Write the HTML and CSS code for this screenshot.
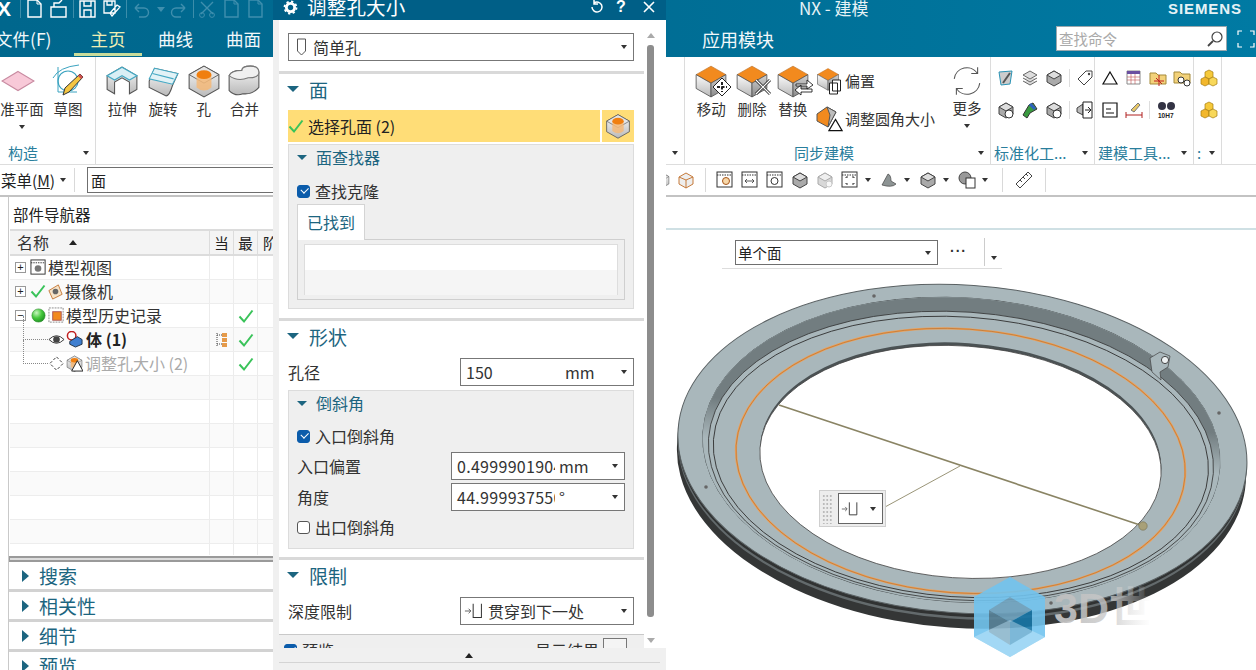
FILE: index.html
```html
<!DOCTYPE html>
<html lang="zh">
<head>
<meta charset="utf-8">
<title>NX - 建模</title>
<link rel="stylesheet" href="styles.css">
</head>
<body>
<svg class="defs" width="0" height="0" aria-hidden="true">
  <defs>
    <linearGradient id="gl" x1="0" y1="0" x2="0" y2="1"><stop offset="0" stop-color="#fafafa"/><stop offset="1" stop-color="#b9b9b9"/></linearGradient>
    <linearGradient id="gr" x1="0" y1="0" x2="0" y2="1"><stop offset="0" stop-color="#d2d2d2"/><stop offset="1" stop-color="#8a8a8a"/></linearGradient>
    <linearGradient id="fade" x1="0" y1="0" x2="1" y2="0"><stop offset="0" stop-color="#bdbdbd"/><stop offset=".6" stop-color="#c9c9c9" stop-opacity=".75"/><stop offset="1" stop-color="#ddd" stop-opacity="0"/></linearGradient>
    <linearGradient id="groove" gradientUnits="userSpaceOnUse" x1="0" y1="415" x2="0" y2="456"><stop offset="0" stop-color="#727d80"/><stop offset="1" stop-color="#727d80" stop-opacity="0"/></linearGradient>
    <radialGradient id="ballg" cx=".35" cy=".3" r=".8"><stop offset="0" stop-color="#c8f5c0"/><stop offset=".5" stop-color="#45c83c"/><stop offset="1" stop-color="#1b8a20"/></radialGradient>
    <symbol id="block" viewBox="0 0 32 32"><path d="M16 2 30 10 16 18 2 10Z" fill="#f28a1e" stroke="#b96a1c" stroke-width=".6"/><path d="M2 10 16 18V31L2 23Z" fill="url(#gl)" stroke="#555" stroke-width=".8"/><path d="M30 10 16 18V31L30 23Z" fill="url(#gr)" stroke="#555" stroke-width=".8"/></symbol>
    <symbol id="hole" viewBox="0 0 32 32"><path d="M16 2 30 10V23L16 31 2 23V10Z" fill="url(#gl)" stroke="#555" stroke-width="1"/><path d="M16 2 30 10 16 18 2 10Z" fill="#e4e4e4" stroke="#555" stroke-width=".8"/><path d="M9 10V22Q16 28 23 22V10Z" fill="#f4b878" opacity=".85"/><ellipse cx="16" cy="10" rx="7" ry="4.2" fill="#f07f10"/></symbol>
    <symbol id="extrude" viewBox="0 0 32 32"><path d="M2 11 16 3 30 11V24L23 28V17L16 13 9 17V28L2 24Z" fill="url(#gl)" stroke="#555"/><path d="M2 11 16 3 30 11 23 15 16 11 9 15Z" fill="#d9eff5" stroke="#45a9c4" stroke-width="1.2"/></symbol>
    <symbol id="revolve" viewBox="0 0 32 32"><path d="M3 16 8 4 30 9 25 20Q22 30 19 30L3 22Z" fill="url(#gl)" stroke="#555"/><path d="M8 4 30 9 25 19 3 14Z" fill="#e2f2f6" stroke="#45a9c4"/><path d="M6 9 26 14" stroke="#45a9c4"/></symbol>
    <symbol id="unite" viewBox="0 0 32 32"><path d="M2 11V25Q8 31 15 28 24 29 30 22V8Q30 2 22 2 14 2 14 6 4 6 2 11Z" fill="url(#gl)" stroke="#555"/><path d="M2 11Q4 6 14 6 14 2 22 2 30 2 30 8 30 13 20 13 10 17 2 11Z" fill="#f0f0f0" stroke="#777"/></symbol>
    <symbol id="plane" viewBox="0 0 32 20"><path d="M16 1 31 10 16 19 1 10Z" fill="#f8c9d8" stroke="#c88aa0"/></symbol>
    <symbol id="sketch" viewBox="0 0 34 34"><path d="M2 14Q8 3 28 1" fill="none" stroke="#3ba3c0"/><path d="M7 3V28H26" fill="none" stroke="#3ba3c0"/><circle cx="17" cy="17" r="10" fill="none" stroke="#3ba3c0" stroke-width="1.2"/><path d="M12 31 14 24 29 10 32 13 18 28Z" fill="#f4c542" stroke="#333" stroke-width="1"/><path d="M27 12 30 15 32 13 29 10Z" fill="#d05050"/></symbol>
    <symbol id="doc" viewBox="0 0 20 20"><path d="M3 1H12L16 5V18H3Z" fill="none" stroke="currentColor" stroke-width="1.4"/><path d="M12 1V5H16" fill="none" stroke="currentColor"/></symbol>
    <symbol id="tick" viewBox="0 0 16 16"><path d="M1.5 8.5 6 13.5 14.5 2.5" fill="none" stroke="#3ac35a" stroke-width="2"/></symbol>
    <symbol id="winbox" viewBox="0 0 18 18"><rect x="1" y="1" width="15" height="15" fill="#fff" stroke="#333"/><path d="M1 4H16" stroke="#333" stroke-dasharray="1.5 1"/></symbol>
    <symbol id="gray" viewBox="0 0 18 18"><path d="M9 2 16 6V13L9 17 2 13V6Z" fill="#aaa" stroke="#444"/><path d="M9 2 16 6 9 10 2 6Z" fill="#ddd" stroke="#444"/></symbol>
    <symbol id="gold" viewBox="0 0 18 18"><path d="M9 1 13 3V8L9 10 5 8V3Z" fill="#f6c93a" stroke="#a57b10" stroke-width=".7"/><path d="M5 8 9 10V15L5 17 1 15V10Z" fill="#f2b72c" stroke="#a57b10" stroke-width=".7"/><path d="M13 8 17 10V15L13 17 9 15V10Z" fill="#f8d85a" stroke="#a57b10" stroke-width=".7"/></symbol>
    <symbol id="depth" viewBox="0 0 24 18"><path d="M1 9H7M5 6.5 7.5 9 5 11.5" fill="none" stroke="#444" stroke-width=".9"/><path d="M10 1V16H19V1" fill="none" stroke="#333" stroke-width="1.1"/></symbol>
  </defs>
</svg>

<div class="app">
  <header class="header">
    <div class="titlebar">
      <div class="quick">
        <span class="nx">X</span><i class="qsep"></i>
        <svg class="qi"><use href="#doc"/></svg>
        <svg class="qi"><path d="M2 8H17V18H2ZM5 8V4H10L13 1" fill="none" stroke="currentColor" stroke-width="1.4"/></svg>
        <i class="qsep"></i>
        <svg class="qi"><path d="M2 2H17V18H2ZM6 2V7H13V2M6 18V11H13V18" fill="none" stroke="currentColor" stroke-width="1.4"/></svg>
        <svg class="qi"><path d="M2 2H13V14H2ZM5 2V6H10V2M10 17 18 8 15 6 8 14Z" fill="none" stroke="currentColor" stroke-width="1.3"/></svg>
        <i class="qsep"></i>
        <svg class="qi dim"><path d="M4 9H13A4 4 0 0 1 13 18H8M4 9 8 5M4 9 8 13" fill="none" stroke="currentColor" stroke-width="1.4"/></svg>
        <svg class="qi dim small"><path d="M4 8H12L8 13Z" fill="currentColor"/></svg>
        <svg class="qi dim"><path d="M16 9H7A4 4 0 0 0 7 18H12M16 9 12 5M16 9 12 13" fill="none" stroke="currentColor" stroke-width="1.4"/></svg>
        <i class="qsep"></i>
        <svg class="qi dim"><path d="M3 3 15 15M15 3 3 15" fill="none" stroke="currentColor" stroke-width="1.4"/><circle cx="4" cy="16" r="2.4" fill="none" stroke="currentColor"/><circle cx="14" cy="16" r="2.4" fill="none" stroke="currentColor"/></svg>
        <svg class="qi dim"><use href="#doc"/></svg>
        <svg class="qi dim"><use href="#doc"/></svg>
      </div>
      <div class="apptitle">NX - 建模</div>
      <div class="siemens">SIEMENS</div>
    </div>
    <div class="tabbar">
      <span class="tab file">文件(F)</span>
      <span class="tab active">主页</span>
      <span class="tab">曲线</span>
      <span class="tab">曲面</span>
      <span class="tab modules">应用模块</span>
      <div class="search">
        <span class="search-text">查找命令</span>
        <svg class="search-icon" viewBox="0 0 18 18"><circle cx="11" cy="7" r="5" fill="none" stroke="#444" stroke-width="1.2"/><path d="M7 11 2 16" stroke="#444" stroke-width="1.8"/></svg>
      </div>
      <svg class="fullscreen" viewBox="0 0 18 18"><path d="M1 5V1H5M13 1H17V5M17 13V17H13M5 17H1V13" fill="none" stroke="#fff" stroke-width="1.2"/></svg>
    </div>
  </header>

  <section class="ribbon">
    <div class="group g-construct">
      <div class="gbody">
        <div class="rbtn r-plane"><svg class="ri plane-i"><use href="#plane"/></svg><span>准平面</span><b class="caret"></b></div>
        <div class="rbtn r-sketch"><svg class="ri"><use href="#sketch"/></svg><span>草图</span></div>
      </div>
      <div class="glabel"><span>构造</span><b class="caret"></b></div>
    </div>
    <div class="group g-features">
      <div class="gbody tight">
        <div class="rbtn"><svg class="ri"><use href="#extrude"/></svg><span>拉伸</span></div>
        <div class="rbtn"><svg class="ri"><use href="#revolve"/></svg><span>旋转</span></div>
        <div class="rbtn"><svg class="ri"><use href="#hole"/></svg><span>孔</span></div>
        <div class="rbtn"><svg class="ri"><use href="#unite"/></svg><span>合并</span></div>
      </div>
    </div>
    <div class="group g-hidden">
      <div class="gbody"></div>
      <div class="glabel end"><b class="caret"></b></div>
    </div>
    <div class="group g-sync">
      <div class="gbody tight">
        <div class="rbtn"><span class="ri-wrap"><svg class="ri"><use href="#block"/></svg><svg class="ri-over" viewBox="0 0 20 20"><path d="M10 1 19 10 10 19 1 10Z" fill="#fff" stroke="#222"/><path d="M10 5V15M5 10H15" stroke="#222" stroke-width="2" stroke-dasharray="3 1.5"/></svg></span><span>移动</span></div>
        <div class="rbtn"><span class="ri-wrap"><svg class="ri"><use href="#block"/></svg><svg class="ri-over" viewBox="0 0 20 20"><path d="M3 3 17 17M17 3 3 17" stroke="#333" stroke-width="3"/><path d="M3 3 17 17M17 3 3 17" stroke="#fff" stroke-width="1.2"/></svg></span><span>删除</span></div>
        <div class="rbtn"><span class="ri-wrap"><svg class="ri"><use href="#block"/></svg><svg class="ri-over" viewBox="0 0 20 20"><path d="M2 7H13V3L19 8 13 12V9H2ZM18 12H7V8L1 13 7 18V15H18Z" fill="#fff" stroke="#222" stroke-width=".9"/></svg></span><span>替换</span></div>
        <div class="rstack">
          <div class="rrow"><span class="ri-wrap small"><svg class="ri"><use href="#block"/></svg><svg class="ri-over sm" viewBox="0 0 14 16"><path d="M4 1H12V12H4ZM1 4H9V15H1Z" fill="#fff" stroke="#222"/></svg></span><span>偏置</span></div>
          <div class="rrow"><span class="ri-wrap small"><svg class="ri" viewBox="0 0 24 24"><path d="M1 9 11 2 20 7 12 22 1 16Z" fill="#f28a1e" stroke="#555"/><path d="M11 2 20 7 12 22 14 10Z" fill="#bdbdbd" stroke="#555"/></svg><svg class="ri-over sm" viewBox="0 0 16 16"><path d="M8 2 15 14H1Z" fill="#fff" stroke="#111" stroke-width="1.2"/></svg></span><span>调整圆角大小</span></div>
        </div>
        <div class="rbtn more"><svg class="ri" viewBox="0 0 32 32"><path d="M4 14A12 12 0 0 1 26 9M26 3V9H20M28 18A12 12 0 0 1 6 23M6 29V23H12" fill="none" stroke="#555" stroke-width="1"/></svg><span>更多</span><b class="caret"></b></div>
      </div>
      <div class="glabel"><span class="center">同步建模</span><b class="caret"></b></div>
    </div>
    <div class="group g-std">
      <div class="gbody mini">
        <div class="mrow">
          <svg class="mi" viewBox="0 0 18 18"><path d="M2 3 15 2 13 15 4 16Z" fill="#ccc" stroke="#2a93b5"/><path d="M6 14 13 4" stroke="#555" stroke-width="2"/></svg>
          <svg class="mi" viewBox="0 0 18 18"><path d="M9 2 16 6 9 10 2 6ZM2 9 9 13 16 9M2 12 9 16 16 12" fill="#ddd" stroke="#666"/></svg>
          <svg class="mi" viewBox="0 0 18 18"><use href="#gray"/></svg>
          <i class="msep"></i>
          <svg class="mi" viewBox="0 0 18 18"><path d="M2 10 10 2H16V8L8 16Z" fill="#fff" stroke="#444"/><circle cx="13" cy="5" r="1.2" fill="#444"/></svg>
        </div>
        <div class="mrow">
          <svg class="mi" viewBox="0 0 18 18"><use href="#gray"/><circle cx="12" cy="13" r="4" fill="#fff" stroke="#333"/></svg>
          <svg class="mi" viewBox="0 0 18 18"><path d="M2 14 8 4 12 2 16 8 9 12 6 17Z" fill="#3a9a40" stroke="#333"/><path d="M9 3 14 8" stroke="#2c5fbe" stroke-width="3"/></svg>
          <svg class="mi" viewBox="0 0 18 18"><use href="#gray"/><circle cx="12" cy="13" r="4" fill="#fff" stroke="#333"/></svg>
          <i class="msep"></i>
          <svg class="mi" viewBox="0 0 18 18"><path d="M1 7 7 3V14L1 11Z" fill="#bbb" stroke="#444"/><path d="M7 1H16V17H7Z" fill="#fff" stroke="#222"/><path d="M9 9H14M12 6 15 9 12 12" fill="none" stroke="#222"/></svg>
        </div>
      </div>
      <div class="glabel"><span>标准化工...</span><b class="caret"></b></div>
    </div>
    <div class="group g-tools">
      <div class="gbody mini">
        <div class="mrow">
          <svg class="mi" viewBox="0 0 18 18"><path d="M9 3 16 15H2Z" fill="#fff" stroke="#111" stroke-width="1.2"/></svg>
          <svg class="mi" viewBox="0 0 18 18"><path d="M2 2H15V15H2Z" fill="#fff" stroke="#8a8a8a"/><path d="M2 2H15V5H2Z" fill="#6a4fa0"/><path d="M2 8H15M2 11H15M6 5V15M10 5V15" stroke="#c05050" stroke-width=".6"/></svg>
          <svg class="mi" viewBox="0 0 18 18"><path d="M1 4H7L9 6H17V15H1Z" fill="#f3d27a" stroke="#a58a3a"/><path d="M5 12H15M10 6V17M7 9 13 15" stroke="#c02020"/></svg>
          <svg class="mi" viewBox="0 0 18 18"><path d="M1 3H7L9 5H17V14H1Z" fill="#f3d27a" stroke="#a58a3a"/><circle cx="8" cy="11" r="3" fill="#fff" stroke="#333"/><circle cx="14" cy="14" r="3" fill="#fff" stroke="#333"/></svg>
        </div>
        <div class="mrow">
          <svg class="mi" viewBox="0 0 18 18"><path d="M2 2H16V16H2Z" fill="#fff" stroke="#111" stroke-width="1.2"/><path d="M5 8H10M5 12H13" stroke="#111"/></svg>
          <svg class="mi" viewBox="0 0 18 18"><path d="M1 14H17M1 11V17M17 11V17" stroke="#b02020"/><path d="M6 9 13 2 15 4 9 11Z" fill="#e8c868" stroke="#777"/></svg>
          <i class="msep"></i>
          <svg class="mi wide" viewBox="0 0 22 18"><circle cx="6" cy="5" r="4" fill="#334"/><circle cx="15" cy="5" r="4" fill="#334"/><text class="tol" x="2" y="17">10H7</text></svg>
        </div>
      </div>
      <div class="glabel"><span>建模工具...</span><b class="caret"></b></div>
    </div>
    <div class="group g-gold">
      <div class="gbody mini">
        <div class="mrow"><svg class="mi"><use href="#gold"/></svg></div>
        <div class="mrow"><svg class="mi"><use href="#gold"/></svg></div>
      </div>
      <div class="glabel"><span>:</span><b class="caret"></b></div>
    </div>
  </section>

  <section class="toolbar">
    <span class="menu-btn">菜单(<u>M</u>)</span><b class="caret dark"></b>
    <i class="tsep first"></i>
    <div class="filter"><span>面</span><b class="caret dark"></b></div>
    <div class="tright">
      <svg class="ti" viewBox="0 0 18 18"><use href="#hole"/></svg>
      <svg class="ti" viewBox="0 0 18 18"><path d="M9 2 16 6V13L9 17 2 13V6Z" fill="#eee" stroke="#c67a3a"/><path d="M9 9V17M2 6 9 9 16 6" stroke="#c67a3a" fill="none"/></svg>
      <i class="tsep"></i>
      <svg class="ti" viewBox="0 0 18 18"><use href="#winbox"/><circle cx="10" cy="10" r="3.5" fill="#f7d7a8" stroke="#a5551a"/></svg>
      <svg class="ti" viewBox="0 0 18 18"><use href="#winbox"/><path d="M4 10H13M4 10 6 8M4 10 6 12M13 10 11 8M13 10 11 12" fill="none" stroke="#333" stroke-width=".8"/></svg>
      <svg class="ti" viewBox="0 0 18 18"><use href="#winbox"/><circle cx="8.5" cy="10" r="3.5" fill="none" stroke="#333"/></svg>
      <svg class="ti" viewBox="0 0 18 18"><use href="#gray"/></svg>
      <svg class="ti pale" viewBox="0 0 18 18"><use href="#gray"/><circle cx="13" cy="13" r="3" fill="#eee" stroke="#888"/></svg>
      <svg class="ti" viewBox="0 0 18 18"><use href="#winbox"/><path d="M5 7V6H7M11 6H13V7M13 12V13H11M7 13H5V12" fill="none" stroke="#333"/></svg><b class="caret dark"></b>
      <svg class="ti" viewBox="0 0 18 18"><path d="M2 14 8 3Q11 4 11 10L16 13Q12 17 2 14Z" fill="#8d9494" stroke="#444" stroke-width=".7"/></svg><b class="caret dark"></b>
      <svg class="ti" viewBox="0 0 18 18"><use href="#gray"/></svg><b class="caret dark"></b>
      <svg class="ti" viewBox="0 0 18 18"><circle cx="7" cy="7" r="6" fill="#999" stroke="#444"/><rect x="8" y="7" width="9" height="10" fill="#fff" stroke="#333"/></svg><b class="caret dark"></b>
      <i class="tsep wide"></i>
      <svg class="ti" viewBox="0 0 18 18"><path d="M1 13 13 1 17 5 5 17Z" fill="#fff" stroke="#444"/><path d="M5 9 7 11M8 6 10 8M11 3 13 5" stroke="#444"/></svg>
      <i class="tsep wide"></i>
    </div>
  </section>

  <main class="workspace">
    <aside class="navigator">
      <div class="nav-title">部件导航器</div>
      <div class="tree">
        <div class="thead">
          <div class="cname">名称<b class="sort"></b></div><div class="ccol">当</div><div class="ccol">最</div><div class="ccol">阶</div>
        </div>
        <div class="trow">
          <div class="cname"><b class="expander">+</b><svg class="ni" viewBox="0 0 18 18"><use href="#winbox"/><circle cx="8.5" cy="10" r="3.5" fill="#777"/></svg><span>模型视图</span></div><div class="ccol"></div><div class="ccol"></div><div class="ccol"></div>
        </div>
        <div class="trow alt">
          <div class="cname"><b class="expander">+</b><svg class="ni tk"><use href="#tick"/></svg><svg class="ni" viewBox="0 0 18 18"><path d="M2 8 12 2 16 12 6 17Z" fill="#f6e3c8" stroke="#c67a3a"/><circle cx="9" cy="9" r="3" fill="#666"/></svg><span>摄像机</span></div><div class="ccol"></div><div class="ccol"></div><div class="ccol"></div>
        </div>
        <div class="trow">
          <div class="cname"><b class="expander">−</b><svg class="ni" viewBox="0 0 18 18"><circle cx="9" cy="9" r="7" fill="url(#ballg)" stroke="#2a8a2a" stroke-width=".6"/></svg><svg class="ni" viewBox="0 0 18 18"><rect x="1" y="1" width="15" height="15" fill="#fff" stroke="#888" stroke-dasharray="2 1"/><rect x="5" y="5" width="9" height="9" fill="#f28a1e" stroke="#a55"/></svg><span>模型历史记录</span></div><div class="ccol"></div><div class="ccol"><svg class="ct"><use href="#tick"/></svg></div><div class="ccol"></div>
        </div>
        <div class="trow alt">
          <div class="cname sub"><i class="dots"></i><svg class="ni" viewBox="0 0 18 18"><path d="M1 9Q9 1 17 9 9 17 1 9Z" fill="#fff" stroke="#333"/><circle cx="9" cy="9" r="3.5" fill="#444"/></svg><svg class="ni" viewBox="0 0 18 18"><circle cx="6" cy="5" r="4.5" fill="#fff" stroke="#c02020" stroke-width="1.6"/><path d="M4 11 12 6 17 9V14L10 17 4 14Z" fill="#3f7fd0" stroke="#234"/></svg><strong>体 (1)</strong></div><div class="ccol"><svg class="ct" viewBox="0 0 16 16"><path d="M3 1V15M3 3H8M3 12H8" stroke="#444" stroke-dasharray="1 1"/><rect x="8" y="1" width="5" height="4" fill="#e59a4a"/><rect x="8" y="6" width="5" height="4" fill="#e59a4a"/><rect x="8" y="11" width="5" height="4" fill="#e59a4a"/></svg></div><div class="ccol"><svg class="ct"><use href="#tick"/></svg></div><div class="ccol"></div>
        </div>
        <div class="trow">
          <div class="cname sub last"><i class="dots"></i><svg class="ni" viewBox="0 0 18 18"><path d="M9 2 16 9 9 16 2 9Z" fill="none" stroke="#333" stroke-dasharray="3 2"/></svg><svg class="ni" viewBox="0 0 18 18"><use href="#hole"/><path d="M12 6 18 17H6Z" fill="#fff" stroke="#222"/></svg><span class="muted">调整孔大小 (2)</span></div><div class="ccol"></div><div class="ccol"><svg class="ct"><use href="#tick"/></svg></div><div class="ccol"></div>
        </div>
        <div class="trow alt"><div class="cname"></div><div class="ccol"></div><div class="ccol"></div><div class="ccol"></div></div>
        <div class="trow"><div class="cname"></div><div class="ccol"></div><div class="ccol"></div><div class="ccol"></div></div>
        <div class="trow alt"><div class="cname"></div><div class="ccol"></div><div class="ccol"></div><div class="ccol"></div></div>
        <div class="trow"><div class="cname"></div><div class="ccol"></div><div class="ccol"></div><div class="ccol"></div></div>
        <div class="trow alt"><div class="cname"></div><div class="ccol"></div><div class="ccol"></div><div class="ccol"></div></div>
        <div class="trow"><div class="cname"></div><div class="ccol"></div><div class="ccol"></div><div class="ccol"></div></div>
        <div class="trow alt"><div class="cname"></div><div class="ccol"></div><div class="ccol"></div><div class="ccol"></div></div>
        <div class="trow stub"><div class="cname"></div><div class="ccol"></div><div class="ccol"></div><div class="ccol"></div></div>
        <div class="hscroll"></div>
      </div>
      <div class="acc"><b class="tri-r"></b>搜索</div>
      <div class="acc"><b class="tri-r"></b>相关性</div>
      <div class="acc"><b class="tri-r"></b>细节</div>
      <div class="acc"><b class="tri-r"></b>预览</div>
    </aside>

    <div class="viewport">
      <div class="view-tabs"></div>
      <svg class="scene" viewBox="273 197 983 473">
        <g transform="rotate(4 962 455)">
          <ellipse cx="962" cy="463" rx="285" ry="165" fill="#343636"/>
          <ellipse cx="962" cy="454" rx="285" ry="165" fill="#636a6c"/>
          <ellipse cx="962" cy="451.5" rx="285" ry="165" fill="#303232"/>
          <ellipse cx="962" cy="449" rx="285" ry="164" fill="#a9b7bb" stroke="#5a6163"/>
          <ellipse cx="961" cy="450" rx="259" ry="152" fill="#a9b7bb" stroke="#3c4142" stroke-width=".9"/>
          <ellipse cx="961" cy="450" rx="259" ry="152" fill="#727d80"/>
          <ellipse cx="961" cy="450" rx="259" ry="152" fill="#a9b7bb" class="groove-mask"/>
          <ellipse cx="961" cy="450" rx="259" ry="152" fill="url(#groove)"/>
          <ellipse cx="961" cy="456" rx="253" ry="144" fill="#a9b7bb" stroke="#333" stroke-width=".8"/>
          <ellipse cx="961" cy="457" rx="248" ry="140" fill="#a9b7bb" stroke="#333" stroke-width=".9"/>
          <ellipse cx="961" cy="461" rx="225" ry="132" fill="none" stroke="#eca25c" stroke-width="2.2"/>
          <ellipse cx="961" cy="461" rx="225" ry="132" fill="none" stroke="#a85f20" stroke-width=".5"/>
          <ellipse cx="961" cy="459" rx="201" ry="116" fill="#4b5254"/>
          <ellipse cx="961" cy="462" rx="201" ry="116" fill="#fff" stroke="#444" stroke-width=".8"/>
        </g>
        <path d="M1150 358 1160 352 1170 356 1168 367 1160 372 1161 380 1152 372Z" fill="#a9b7bb" stroke="#444" stroke-width=".7"/>
        <circle cx="1165" cy="360" r="3.6" fill="#eef2f3" stroke="#444"/>
        <circle cx="874" cy="296" r="1.8" fill="#666"/>
        <circle cx="1219" cy="413" r="1.8" fill="#666"/>
        <circle cx="706" cy="487" r="1.8" fill="#666"/>
        <circle cx="1051" cy="603" r="1.8" fill="#666"/>
        <path d="M779 405 1143 526" stroke="#8a8464" stroke-width="1.6"/>
        <path d="M960 466 885 507" stroke="#9a9578" stroke-width="1"/>
        <circle cx="1143" cy="526" r="4.2" fill="#a8a078" stroke="#766f50" stroke-width=".6"/>
        <g class="mark">
          <path d="M1010 577 1045 597V637L1010 657 974 637V597Z" fill="#72c4ef"/>
          <path d="M1010 597 1032 610 1010 622 989 610Z" fill="#6fa3bf"/>
          <path d="M989 610 1010 622V645L989 632Z" fill="#59849a"/>
          <path d="M1032 610 1010 622V645L1032 632Z" fill="#1877a8"/>
          <path d="M974 637 1010 620 1045 637 1010 657Z" fill="#b8e2f7" opacity=".55"/>
        </g>
        <text class="mark-text" x="1054" y="623" fill="url(#fade)">3D世</text>
      </svg>
      <div class="sel-bar">
        <div class="sel-box"><span>单个面</span><b class="caret dark"></b></div>
        <span class="ellipsis">···</span>
        <i class="sel-sep"></i>
        <b class="caret dark low"></b>
      </div>
      <div class="handle">
        <i class="grip"></i>
        <div class="handle-box"><svg class="hi"><use href="#depth"/></svg><b class="caret dark"></b></div>
      </div>
    </div>
  </main>

  <div class="dialog">
    <div class="dlg-title">
      <svg class="gear" viewBox="0 0 16 16"><circle cx="8" cy="8" r="4.4" fill="none" stroke="#fff" stroke-width="3"/><circle cx="8" cy="8" r="6.4" fill="none" stroke="#fff" stroke-width="2" stroke-dasharray="2.4 2.6"/></svg>
      <span class="dlg-name">调整孔大小</span>
      <svg class="dlg-i reset" viewBox="0 0 14 14"><path d="M4 3A5 5 0 1 1 2 7M4 0V4H8" fill="none" stroke="#fff" stroke-width="1.5"/></svg>
      <span class="dlg-q">?</span>
      <svg class="dlg-i close" viewBox="0 0 14 14"><path d="M2 2 12 12M12 2 2 12" stroke="#fff" stroke-width="1.6"/></svg>
    </div>
    <div class="dlg-main">
      <div class="dlg-panel">
        <div class="sec sec-type">
          <div class="field full"><svg class="pin" viewBox="0 0 10 18"><path d="M1 1H9V13L5 17 1 13Z" fill="#fff" stroke="#555"/></svg><span>简单孔</span><b class="caret dark"></b></div>
        </div>
        <div class="sec sec-face">
          <h2 class="sec-h"><b class="tri-d"></b>面</h2>
          <div class="pick">
            <div class="pick-main"><svg class="pick-tick"><use href="#tick"/></svg>选择孔面 (2)</div>
            <div class="pick-btn"><svg class="pick-i"><use href="#hole"/></svg></div>
          </div>
          <div class="subpanel finder">
            <h3 class="sub-h"><b class="tri-d sm"></b>面查找器</h3>
            <label class="check on"><i class="box"></i>查找克隆</label>
            <div class="tabstrip"><span class="ftab">已找到</span></div>
            <div class="found">
              <div class="found-list"><div class="found-row"></div><div class="found-row alt"></div></div>
            </div>
          </div>
        </div>
        <div class="sec sec-shape">
          <h2 class="sec-h"><b class="tri-d"></b>形状</h2>
          <div class="frow">
            <span>孔径</span>
            <div class="field num"><span class="val">150</span><span class="unit">mm</span><b class="caret dark"></b></div>
          </div>
          <div class="subpanel chamfer">
            <h3 class="sub-h"><b class="tri-d sm"></b>倒斜角</h3>
            <label class="check on"><i class="box"></i>入口倒斜角</label>
            <div class="frow inner"><span>入口偏置</span><div class="field num"><span class="val clip">0.4999901904</span><span class="unit">mm</span><b class="caret dark"></b></div></div>
            <div class="frow inner"><span>角度</span><div class="field num"><span class="val clip">44.9999375500</span><span class="unit">°</span><b class="caret dark"></b></div></div>
            <label class="check"><i class="box"></i>出口倒斜角</label>
          </div>
        </div>
        <div class="sec sec-limit">
          <h2 class="sec-h"><b class="tri-d"></b>限制</h2>
          <div class="frow">
            <span>深度限制</span>
            <div class="field num"><svg class="depth-i"><use href="#depth"/></svg><span class="val">贯穿到下一处</span><b class="caret dark"></b></div>
          </div>
        </div>
        <div class="sec-foot">
          <label class="check on"><i class="box"></i>预览</label>
          <span class="show">显示结果<i class="show-btn"></i></span>
        </div>
      </div>
      <div class="vscroll"><b class="up"></b><i class="thumb"></i><b class="down"></b></div>
    </div>
    <div class="dlg-bottom"><b class="up dark"></b></div>
  </div>
</div>
</body>
</html>
```

FILE: styles.css
```css
* { box-sizing: border-box; }
html, body { margin: 0; padding: 0; background: #fff; }
body { font-family: "Noto Sans CJK SC", "Noto Sans", sans-serif; color: #222; }
.defs { position: absolute; }
.app { position: relative; width: 1256px; height: 670px; overflow: hidden; display: grid; grid-template-rows: 57px 108px 32px 473px; background: #fff; }
b, i { font-style: normal; font-weight: normal; }

.caret { display: inline-block; width: 0; height: 0; border-left: 3.5px solid transparent; border-right: 3.5px solid transparent; border-top: 4px solid #333; }

/* header */
.header { background: linear-gradient(90deg, #00678d 0%, #006d94 50%, #007aa3 100%); color: #fff; display: flex; flex-direction: column; }
.titlebar { height: 24px; position: relative; display: flex; align-items: center; }
.quick { display: flex; align-items: center; color: #fff; height: 20px; margin-top: -6px; }
.nx { font: 800 21px/20px "Liberation Sans", sans-serif; margin-left: -3px; width: 21px; }
.qsep { width: 1px; height: 18px; background: #3c8daa; margin: 0 2px; }
.qi { width: 20px; height: 20px; margin: 0 2px; color: #fff; }
.qi.dim { color: #3f8fae; }
.qi.small { width: 14px; margin: 0; }
.apptitle { position: absolute; left: 799px; top: -2px; font-size: 17px; line-height: 20px; color: #e6f2f6; }
.siemens { position: absolute; left: 1168px; top: 1px; font: 700 15px/16px "Liberation Sans", sans-serif; letter-spacing: .9px; color: #e6f2f6; }
.tabbar { height: 33px; display: flex; align-items: flex-start; position: relative; }
.tab { font-size: 17.5px; line-height: 30px; color: #f2f8fa; flex: none; }
.tab.file { width: 76px; margin-left: -5px; }
.tab.active { width: 68px; margin-left: 3px; text-align: center; color: #efeeb4; height: 32px; border-bottom: 3px solid #c9dc9b; }
.tab:nth-child(3) { margin-left: 16px; width: 68px; }
.tab:nth-child(4) { width: 40px; }
.tab.modules { margin-left: 436px; font-size: 18px; }
.search { width: 171px; height: 25px; margin: 2px 0 0 282px; background: #fff; border: 1px solid #9aa7ad; display: flex; align-items: center; justify-content: space-between; padding: 0 2px; }
.search-text { color: #a9a9a9; font-size: 14.5px; line-height: 20px; }
.search-icon { width: 18px; height: 18px; }
.fullscreen { width: 18px; height: 18px; margin: 6px 0 0 10px; }

/* ribbon */
.ribbon { display: flex; background: #fff; border-bottom: 1px solid #ddd; height: 108px; }
.group { display: flex; flex-direction: column; flex: none; padding-top: 5px; }
.group + .group { border-left: 1px solid #dcdcdc; }
.gbody { flex: 1; display: flex; min-height: 0; }
.gbody.tight { padding-left: 6px; }
.glabel { height: 20px; display: flex; align-items: center; justify-content: space-between; color: #2a7e9c; font-size: 15px; line-height: 18px; padding: 0 6px 3px 3px; }
.glabel.end { justify-content: flex-end; }
.glabel .caret { border-top-color: #333; border-left-width: 3px; border-right-width: 3px; }
.glabel .center { margin-left: 106px; }
.g-construct { width: 95px; }
.g-construct .glabel { padding-left: 8px; }
.g-features { width: 205px; }
.g-hidden { width: 384px; }
.g-sync { width: 306px; }
.g-std { width: 104px; }
.g-tools { width: 99px; }
.g-gold { width: 29px; border-right: 1px solid #dcdcdc; }
.rbtn { display: flex; flex-direction: column; align-items: center; width: 40.7px; flex: none; font-size: 14.5px; line-height: 20px; color: #333; padding-top: 2px; }
.rbtn span { white-space: nowrap; }
.ri { width: 34px; height: 34px; display: block; }
.rbtn > .ri { margin-bottom: 1px; }
.rbtn .caret { margin-top: 6px; border-left-width: 3px; border-right-width: 3px; }
.r-plane { width: 50px; margin-left: -3px; }
.r-plane > span { direction: rtl; }
.rbtn > .plane-i { height: 24px; margin: 5px 0 6px -8px; }
.r-sketch { width: 46px; margin-left: -2px; }
.ri-wrap { position: relative; display: block; width: 34px; height: 35px; }
.ri-over { position: absolute; right: -4px; bottom: 2px; width: 20px; height: 20px; }
.ri-wrap.small { width: 26px; height: 28px; flex: none; }
.ri-wrap.small .ri { width: 24px; height: 24px; }
.ri-over.sm { width: 15px; height: 16px; bottom: 0; right: -1px; }
.rstack { display: flex; flex-direction: column; gap: 10px; margin-left: 3px; width: 132px; flex: none; padding-top: 5px; font-size: 15px; }
.rrow { display: flex; align-items: center; gap: 3px; font-size: 15px; line-height: 20px; color: #333; white-space: nowrap; }
.rbtn.more { width: 38px; margin-left: 0; }
.rbtn.more > .ri { margin-bottom: 0; }
.gbody.mini { flex-direction: column; gap: 12px; padding: 6px 0 0 6px; }
.mrow { display: flex; align-items: center; gap: 6px; height: 20px; }
.mi { width: 18px; height: 18px; flex: none; }
.mi.wide { width: 22px; }
.tol { font: 700 6.5px "Liberation Sans", sans-serif; fill: #222; }
.msep { width: 1px; height: 18px; background: #ddd; }

/* toolbar */
.toolbar { display: flex; align-items: center; height: 32px; border-bottom: 2px solid #c3c3c3; font-size: 15.5px; background: #fff; position: relative; }
.menu-btn { margin-left: 1px; width: 59px; line-height: 20px; }
.tsep { width: 1px; height: 24px; background: #d9d9d9; flex: none; margin: 0 3px; }
.tsep.wide { margin: 0 5px; }
.tsep.first { margin: 0 12px 0 8px; }
.filter { width: 200px; height: 26px; border: 1px solid #6f6f6f; display: flex; align-items: center; justify-content: space-between; padding: 0 6px 0 3px; flex: none; font-size: 15px; }
.tright { display: flex; align-items: center; gap: 7px; margin-left: 365px; }
.ti { width: 18px; height: 18px; flex: none; }
.ti.pale { opacity: .45; }
.tright .caret { margin-left: -1px; margin-right: 2px; }

/* workspace */
.workspace { display: grid; grid-template-columns: 273px 983px; min-height: 0; }
.navigator { overflow: hidden; background: #fff; position: relative; }
.navigator::before { content: ""; position: absolute; left: 8px; top: 0; bottom: 0; width: 1px; background: #c9c9c9; }
.nav-title { height: 32px; padding: 5px 0 0 13px; font-size: 15.5px; line-height: 24px; color: #222; }
.tree { margin-left: 10px; border-top: 2px solid #dcdcdc; }
.thead, .trow { display: grid; grid-template-columns: 200px 24px 24px 15px; }
.thead { height: 25px; background: #f4f4f4; border-bottom: 2px solid #dcdcdc; font-size: 16px; line-height: 23px; }
.thead .ccol { font-size: 14.5px; }
.thead .cname { padding-left: 7px; color: #333; border-right: 1px solid #dcdcdc; display: flex; align-items: center; }
.sort { width: 0; height: 0; border-left: 4px solid transparent; border-right: 4px solid transparent; border-bottom: 5px solid #222; margin-left: 20px; }
.ccol { border-right: 1px solid #ececec; display: flex; align-items: center; justify-content: center; overflow: hidden; white-space: nowrap; }
.ccol:last-child { justify-content: flex-start; padding-left: 5px; border-right: 0; }
.thead .ccol { border-right-color: #dcdcdc; }
.trow { height: 24px; border-bottom: 1px solid #ededed; background: #fff; font-size: 16px; }
.trow.alt { background: #fafafa; }
.trow.stub { height: 11px; border-bottom: 0; }
.trow .cname { display: flex; align-items: center; padding-left: 5px; gap: 1px; position: relative; border-right: 1px solid #ececec; line-height: 22px; white-space: nowrap; color: #333; padding-bottom: 1px; }
.expander { width: 11px; height: 11px; border: 1px solid #999; background: #fff; font: 11px/8px "Liberation Sans", sans-serif; text-align: center; margin-right: 3px; color: #222; flex: none; }
.ni { width: 17px; height: 17px; flex: none; }
.ni.tk { width: 16px; height: 16px; }
.ct { width: 16px; height: 16px; }
.cname.sub { padding-left: 38px; }
.dots { position: absolute; left: 13px; top: -12px; width: 25px; height: 24px; border-left: 1px dotted #888; border-bottom: 1px dotted #888; }
.cname strong { font-size: 16px; font-weight: 700; margin-left: 2px; color: #222; }
.muted { color: #aaa; margin-left: 1px; }
.hscroll { height: 6px; background: #ddd; border: 1px solid #9a9a9a; border-width: 2px 0 2px 1px; margin-top: 1px; margin-left: -1px; }
.acc { height: 30px; margin-left: 9px; border-bottom: 3px solid #d2d2d2; color: #1c6580; font-size: 19px; line-height: 28px; display: flex; align-items: center; padding-left: 13px; }
.tri-r { width: 0; height: 0; border-top: 6px solid transparent; border-bottom: 6px solid transparent; border-left: 7px solid #1c6580; margin-right: 10px; }

/* viewport */
.viewport { position: relative; background: #fff; overflow: hidden; }
.view-tabs { height: 33px; border-bottom: 2px solid #cfe0e4; }
.scene { position: absolute; left: 0; top: 0; width: 983px; height: 473px; }
.mark { opacity: .9; }
.mark-text { font: 700 43px "Liberation Sans", "Noto Sans CJK SC", sans-serif; }
.sel-bar { position: absolute; left: 449px; top: 40px; width: 280px; height: 32px; border-bottom: 1px solid #ddd; display: flex; align-items: flex-start; padding: 3px 0 0 13px; }
.sel-box { width: 203px; height: 25px; border: 1px solid #6f6f6f; display: flex; align-items: center; justify-content: space-between; padding: 0 6px 0 2px; font-size: 14.5px; background: #fff; }
.ellipsis { margin-left: 12px; width: 34px; font: 700 14px/22px "Liberation Sans", sans-serif; letter-spacing: 1px; color: #333; }
.sel-sep { width: 1px; height: 28px; background: #ccc; margin-top: -2px; }
.caret.low { margin: 16px 0 0 6px; border-left-width: 3px; border-right-width: 3px; }
.handle { position: absolute; left: 546px; top: 293px; width: 67px; height: 37px; background: #ededed; border: 1px solid #cfcfcf; display: flex; align-items: center; padding-right: 2px; }
.grip { width: 10px; height: 30px; margin: 0 6px 0 2px; background-image: radial-gradient(#bbb 1px, transparent 1.2px); background-size: 3.5px 4px; }
.handle-box { width: 45px; height: 31px; background: #fff; border: 1px solid #666; display: flex; align-items: center; justify-content: space-between; padding: 0 6px 0 2px; }
.hi { width: 20px; height: 18px; }

/* dialog */
.dialog { position: absolute; left: 273px; top: 0; width: 393px; height: 670px; background: #f0f0f0; display: flex; flex-direction: column; font-size: 16px; color: #333; }
.dlg-title { height: 20px; flex: none; background: #005f87; color: #fff; display: flex; align-items: center; position: relative; overflow: hidden; }
.gear { position: absolute; left: 10px; top: 0; width: 15px; height: 15px; }
.dlg-name { position: absolute; left: 34px; top: -6px; font-size: 19.5px; line-height: 26px; letter-spacing: .2px; }
.dlg-i { position: absolute; width: 14px; height: 14px; top: 0; }
.reset { left: 317px; }
.close { left: 369px; }
.dlg-q { position: absolute; left: 343px; top: -3px; font: 700 16px/20px "Liberation Sans", sans-serif; }
.dlg-main { flex: 1; min-height: 0; display: flex; padding: 4px 0 0; background: #fff; border-left: 6px solid #f0f0f0; }
.dlg-panel { width: 365px; height: 624px; overflow: hidden; display: flex; flex-direction: column; flex: none; }
.sec { background: #fff; padding: 0 10px 0 9px; flex: none; border-bottom: 3px solid #d9d9d9; }
.sec-type { height: 50px; padding-top: 9px; }
.sec-face { height: 247px; }
.sec-shape { height: 239px; }
.sec-limit { height: 75px; border-bottom-width: 1px; border-bottom-color: #c9c9c9; }
.sec-h { margin: 0; height: 36px; padding-bottom: 6px; display: flex; align-items: center; font-size: 19px; font-weight: 400; color: #1c6580; }
.tri-d { width: 0; height: 0; border-left: 6px solid transparent; border-right: 6px solid transparent; border-top: 6px solid #1c6580; margin: 0 10px 0 -1px; }
.tri-d.sm { border-left-width: 5px; border-right-width: 5px; border-top-width: 5px; margin: 0 9px 0 0; }
.field { border: 1px solid #777; background: #fff; display: flex; align-items: center; height: 28px; flex: none; position: relative; }
.field > .caret { position: absolute; right: 6px; top: 11px; }
.field.full { width: 346px; padding-left: 7px; gap: 6px; }
.pin { width: 11px; height: 18px; }
.pick { display: flex; gap: 2px; height: 32px; }
.pick-main { width: 312px; background: #ffdd77; display: flex; align-items: center; gap: 4px; color: #222; }
.pick-tick { width: 16px; height: 16px; }
.pick-btn { width: 32px; background: #ffdd77; display: flex; align-items: center; justify-content: center; }
.pick-i { width: 26px; height: 26px; }
.subpanel { background: #efefef; border: 1px solid #dcdcdc; width: 346px; padding: 0 0 0 8px; }
.finder { height: 165px; margin-top: 2px; }
.chamfer { height: 159px; margin-top: 3px; }
.sub-h { margin: 0; height: 26px; padding-bottom: 2px; display: flex; align-items: center; font-size: 16px; font-weight: 400; color: #1c6580; }
.check { display: flex; align-items: center; height: 24px; color: #333; gap: 5px; margin-top: 8px; }
.box { width: 13px; height: 13px; border: 1px solid #555; border-radius: 3px; background: #fff; flex: none; position: relative; }
.check.on .box { background: #0b5cab; border-color: #0b5cab; }
.check.on .box::after { content: ""; position: absolute; left: 3px; top: 1.5px; width: 6px; height: 3.5px; border-left: 1px solid #fff; border-bottom: 1px solid #fff; transform: rotate(-45deg); }
.tabstrip { height: 35px; margin-top: 1px; }
.ftab { display: inline-block; width: 68px; height: 36px; background: #fff; border: 1px solid #d4d4d4; border-bottom: 0; color: #1c6580; text-align: center; line-height: 34px; position: relative; z-index: 1; }
.found { width: 328px; height: 61px; border: 1px solid #cfcfcf; background: #efefef; padding: 4px 6px; }
.found-list { border: 1px solid #ddd; background: #fff; height: 51px; }
.found-row { height: 25px; }
.found-row.alt { background: #f5f5f5; }
.frow { display: flex; align-items: center; justify-content: space-between; height: 30px; width: 346px; }
.frow .field.num { width: 174px; }
.frow.inner { width: 328px; height: 31.5px; }
.chamfer .check.on { margin-top: 7px; margin-bottom: 2px; }
.chamfer .check:not(.on) { margin-top: 2px; }
.val { padding-left: 5px; white-space: nowrap; }
.val.clip { width: 103px; overflow: hidden; letter-spacing: .3px; }
.unit { margin-left: 4px; }
.sec-shape > .frow .unit { margin-left: 64px; }
.sec-shape > .frow .val { width: 40px; }
.depth-i { width: 22px; height: 18px; margin-left: 3px; flex: none; }
.depth-i + .val { padding-left: 2px; }
.sec-foot { height: 14px; background: #efefef; overflow: hidden; display: flex; justify-content: space-between; padding: 0 17px 0 5px; flex: none; }
.sec-foot .check { margin-top: 3px; }
.show { display: flex; gap: 4px; line-height: 24px; margin-top: 3px; }
.show-btn { width: 24px; height: 24px; border: 1px solid #777; background: #f4f4f4; }
.vscroll { flex: 1; background: #fff; position: relative; }
.vscroll .thumb { position: absolute; left: 3px; top: 21px; width: 7px; height: 572px; background: #8d8d8d; border-radius: 3px; }
.up { position: absolute; width: 0; height: 0; border-left: 4px solid transparent; border-right: 4px solid transparent; border-bottom: 5px solid #aaa; }
.down { position: absolute; width: 0; height: 0; border-left: 4px solid transparent; border-right: 4px solid transparent; border-top: 5px solid #aaa; }
.vscroll .up { left: 2.5px; top: 9px; }
.vscroll .down { left: 2.5px; top: 614px; }
.dlg-bottom { height: 22px; flex: none; background: #f0f0f0; position: relative; }
.dlg-bottom::after { content: ""; position: absolute; left: 6px; right: 6px; top: 14px; height: 1px; background: #d4d4d4; }
.up.dark { border-bottom-color: #222; left: 192px; top: 5px; }
```
